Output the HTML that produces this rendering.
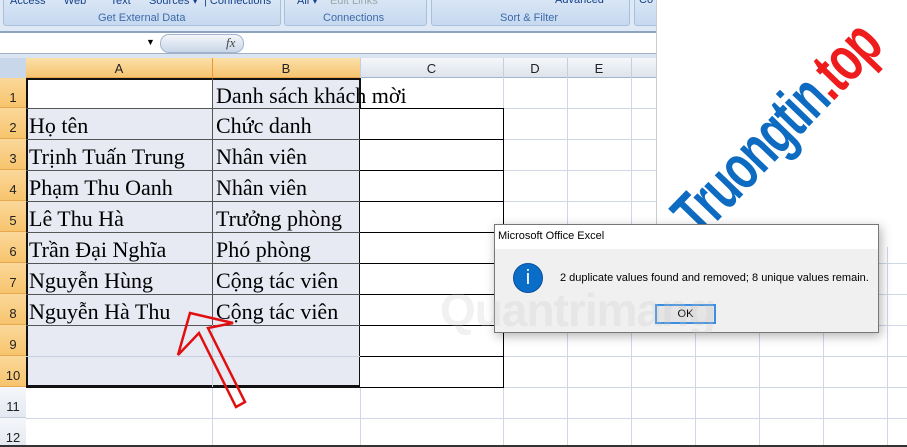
<!DOCTYPE html>
<html><head><meta charset="utf-8"><style>
*{margin:0;padding:0;box-sizing:border-box}
body{width:907px;height:447px;overflow:hidden;background:#fff;position:relative;font-family:"Liberation Sans",sans-serif}
.a{position:absolute}
.t{position:absolute;font-family:"Liberation Serif",serif;font-size:22px;color:#000;white-space:nowrap;line-height:31px}
.rh{position:absolute;left:0;width:26px;text-align:center;font-size:13px;color:#222;background:linear-gradient(#fbd89a,#f7c46d);border-bottom:1px solid #e8a94e;padding-top:12px}
.vl{position:absolute;width:1px;background:#d0d7e5}
.hl{position:absolute;height:1px;background:#d0d7e5}
.g{position:absolute;top:-4px;height:30px;background:linear-gradient(#dbe7f5,#c6d9f0);border:1px solid #a8c0dc;border-radius:3px}
.gl{position:absolute;top:12px;font-size:11px;color:#3e6aaa;white-space:nowrap}
</style></head><body>
<div class="a" style="left:0;top:0;width:907px;height:31px;background:#dfe9f5"></div>
<div class="g" style="left:3px;width:278px"></div>
<div class="g" style="left:284px;width:143px"></div>
<div class="g" style="left:431px;width:199px"></div>
<div class="g" style="left:634px;width:40px"></div>
<div class="a" style="left:10px;top:-6px;font-size:11px;color:#15428b;white-space:nowrap">Access &nbsp;&nbsp;&nbsp;&nbsp; Web &nbsp;&nbsp;&nbsp;&nbsp;&nbsp;&nbsp; Text &nbsp;&nbsp;&nbsp;&nbsp; Sources ▾ &nbsp;| Connections</div>
<div class="a" style="left:297px;top:-6px;font-size:11px;color:#15428b;white-space:nowrap">All ▾ &nbsp;&nbsp; <span style="color:#9aa">Edit Links</span></div>
<div class="a" style="left:555px;top:-6px;font-size:11px;color:#15428b">Advanced</div>
<div class="a" style="left:639px;top:-6px;font-size:11px;color:#15428b">Co</div>
<div class="gl" style="left:98px">Get External Data</div>
<div class="gl" style="left:323px">Connections</div>
<div class="gl" style="left:500px">Sort &amp; Filter</div>
<div class="a" style="left:0;top:31px;width:907px;height:2px;background:#8ea3bf"></div>
<div class="a" style="left:0;top:33px;width:907px;height:20px;background:#fff"></div>
<div class="a" style="left:146px;top:37px;font-size:9px">▼</div>
<div class="a" style="left:160px;top:34px;width:84px;height:19px;border-radius:9px;background:linear-gradient(#f4f7fb,#c9d6e8);border:1px solid #a4b4cc"></div>
<div class="a" style="left:226px;top:35px;font-family:'Liberation Serif',serif;font-style:italic;font-size:13px;color:#444">fx</div>
<div class="a" style="left:0;top:53px;width:907px;height:5px;background:#dbe5f1;border-top:1px solid #9fb0c8"></div>
<div class="a" style="left:0;top:58px;width:907px;height:20px;background:linear-gradient(#f5f7fa,#dee3ec);border-bottom:1px solid #9eb6ce"></div>
<div class="a" style="left:0;top:58px;width:26px;height:20px;background:#c9d7ea"></div>
<div class="a" style="left:26px;top:58px;width:334px;height:20px;background:linear-gradient(#fbe0a8,#f6c470);border-bottom:1px solid #e8a94e"></div>
<div class="a" style="left:26px;top:61px;width:186px;text-align:center;font-size:13px;color:#222">A</div>
<div class="a" style="left:212px;top:61px;width:148px;text-align:center;font-size:13px;color:#222">B</div>
<div class="a" style="left:360px;top:61px;width:143px;text-align:center;font-size:13px;color:#222">C</div>
<div class="a" style="left:503px;top:61px;width:64px;text-align:center;font-size:13px;color:#222">D</div>
<div class="a" style="left:567px;top:61px;width:64px;text-align:center;font-size:13px;color:#222">E</div>
<div class="a" style="left:212px;top:58px;width:1px;height:20px;background:#f29436"></div>
<div class="a" style="left:360px;top:58px;width:1px;height:20px;background:#c5ceda"></div>
<div class="a" style="left:503px;top:58px;width:1px;height:20px;background:#c5ceda"></div>
<div class="a" style="left:567px;top:58px;width:1px;height:20px;background:#c5ceda"></div>
<div class="a" style="left:631px;top:58px;width:1px;height:20px;background:#c5ceda"></div>
<div class="vl" style="left:503px;top:78px;height:369px"></div>
<div class="vl" style="left:567px;top:78px;height:369px"></div>
<div class="vl" style="left:631px;top:78px;height:369px"></div>
<div class="vl" style="left:695px;top:78px;height:369px"></div>
<div class="vl" style="left:759px;top:78px;height:369px"></div>
<div class="vl" style="left:823px;top:78px;height:369px"></div>
<div class="vl" style="left:887px;top:78px;height:369px"></div>
<div class="vl" style="left:212px;top:387px;height:60px"></div>
<div class="vl" style="left:360px;top:387px;height:60px"></div>
<div class="hl" style="left:26px;top:108px;width:881px"></div>
<div class="hl" style="left:26px;top:139px;width:881px"></div>
<div class="hl" style="left:26px;top:170px;width:881px"></div>
<div class="hl" style="left:26px;top:201px;width:881px"></div>
<div class="hl" style="left:26px;top:232px;width:881px"></div>
<div class="hl" style="left:26px;top:263px;width:881px"></div>
<div class="hl" style="left:26px;top:294px;width:881px"></div>
<div class="hl" style="left:26px;top:325px;width:881px"></div>
<div class="hl" style="left:26px;top:356px;width:881px"></div>
<div class="hl" style="left:26px;top:387px;width:881px"></div>
<div class="hl" style="left:26px;top:418px;width:881px"></div>
<div class="rh" style="top:78px;height:30px">1</div>
<div class="rh" style="top:108px;height:31px">2</div>
<div class="rh" style="top:139px;height:31px">3</div>
<div class="rh" style="top:170px;height:31px">4</div>
<div class="rh" style="top:201px;height:31px">5</div>
<div class="rh" style="top:232px;height:31px">6</div>
<div class="rh" style="top:263px;height:31px">7</div>
<div class="rh" style="top:294px;height:31px">8</div>
<div class="rh" style="top:325px;height:31px">9</div>
<div class="rh" style="top:356px;height:31px">10</div>
<div class="rh" style="top:387px;height:31px;background:linear-gradient(#f5f7fa,#e4e9f1);border-bottom:1px solid #c5ceda">11</div>
<div class="rh" style="top:418px;height:29px;background:linear-gradient(#f5f7fa,#e4e9f1)">12</div>
<div class="a" style="left:26px;top:108px;width:334px;height:279px;background:#e7eaf3"></div>
<div class="a" style="left:212px;top:78px;width:148px;height:30px;background:#e7eaf3"></div>
<div class="a" style="left:26px;top:78px;width:335px;height:310px;border:2px solid #111;border-bottom:3px solid #111"></div>
<div class="a" style="left:212px;top:78px;width:1px;height:247px;background:#555"></div>
<div class="a" style="left:26px;top:108px;width:334px;height:1px;background:#555"></div>
<div class="a" style="left:26px;top:139px;width:334px;height:1px;background:#555"></div>
<div class="a" style="left:26px;top:170px;width:334px;height:1px;background:#555"></div>
<div class="a" style="left:26px;top:201px;width:334px;height:1px;background:#555"></div>
<div class="a" style="left:26px;top:232px;width:334px;height:1px;background:#555"></div>
<div class="a" style="left:26px;top:263px;width:334px;height:1px;background:#555"></div>
<div class="a" style="left:26px;top:294px;width:334px;height:1px;background:#555"></div>
<div class="a" style="left:26px;top:325px;width:334px;height:1px;background:#555"></div>
<div class="a" style="left:212px;top:325px;width:1px;height:62px;background:#c8d0e0"></div>
<div class="a" style="left:26px;top:356px;width:334px;height:1px;background:#c8d0e0"></div>
<div class="a" style="left:360px;top:108px;width:144px;height:280px;border:1px solid #000;border-left:none;background:#fff"></div>
<div class="a" style="left:360px;top:139px;width:143px;height:1px;background:#000"></div>
<div class="a" style="left:360px;top:170px;width:143px;height:1px;background:#000"></div>
<div class="a" style="left:360px;top:201px;width:143px;height:1px;background:#000"></div>
<div class="a" style="left:360px;top:232px;width:143px;height:1px;background:#000"></div>
<div class="a" style="left:360px;top:263px;width:143px;height:1px;background:#000"></div>
<div class="a" style="left:360px;top:294px;width:143px;height:1px;background:#000"></div>
<div class="a" style="left:360px;top:325px;width:143px;height:1px;background:#000"></div>
<div class="a" style="left:360px;top:356px;width:143px;height:1px;background:#000"></div>
<div class="a" style="left:0;top:445px;width:907px;height:2px;background:#333"></div>
<div class="t" style="left:216px;top:80px">Danh sách khách mời</div>
<div class="t" style="left:29px;top:110px">Họ tên</div><div class="t" style="left:216px;top:110px">Chức danh</div>
<div class="t" style="left:29px;top:141px">Trịnh Tuấn Trung</div><div class="t" style="left:216px;top:141px">Nhân viên</div>
<div class="t" style="left:29px;top:172px">Phạm Thu Oanh</div><div class="t" style="left:216px;top:172px">Nhân viên</div>
<div class="t" style="left:29px;top:203px">Lê Thu Hà</div><div class="t" style="left:216px;top:203px">Trưởng phòng</div>
<div class="t" style="left:29px;top:234px">Trần Đại Nghĩa</div><div class="t" style="left:216px;top:234px">Phó phòng</div>
<div class="t" style="left:29px;top:265px">Nguyễn Hùng</div><div class="t" style="left:216px;top:265px">Cộng tác viên</div>
<div class="t" style="left:29px;top:296px">Nguyễn Hà Thu</div><div class="t" style="left:216px;top:296px">Cộng tác viên</div>
<svg class="a" style="left:0;top:0" width="907" height="447"><polygon points="190,313 233,323 208,328 245,402 236,407 199,333 178,355" fill="none" stroke="#e01010" stroke-width="2.5" stroke-linejoin="miter"/></svg>
<div class="a" style="left:656px;top:0;width:251px;height:247px;background:#fff;border-left:1px solid #ccc"></div>
<div class="a" style="left:0;top:0;width:907px;height:247px;overflow:hidden">
<div class="a" style="left:706px;top:184px;height:62px;font-weight:bold;font-size:64px;line-height:62px;color:#0e6bc2;white-space:nowrap;transform:rotate(-46deg) scaleX(0.69);transform-origin:0 100%;letter-spacing:-2px">Truongtin<span style="color:#ee1c1c">.top</span></div>
</div>
<div class="a" style="left:494px;top:224px;width:385px;height:109px;background:#f0f0f0;border:1px solid #777;box-shadow:2px 3px 10px rgba(0,0,0,.3)"></div>
<div class="a" style="left:495px;top:225px;width:383px;height:24px;background:#fff"></div>
<div class="a" style="left:498px;top:230px;font-size:11px;color:#000">Microsoft Office Excel</div>
<div class="a" style="left:513px;top:263px;width:30px;height:30px;border-radius:50%;background:#0a6dc7;border:1px solid #0a4f9a;color:#fff;text-align:center;font-size:20px;line-height:28px">i</div>
<div class="a" style="left:560px;top:272px;font-size:11px;color:#000;white-space:nowrap">2 duplicate values found and removed; 8 unique values remain.</div>
<div class="a" style="left:655px;top:304px;width:61px;height:20px;border:2px solid #3b8ee0;background:#e5e5e5;font-size:11px;text-align:center;line-height:16px">OK</div>
<div class="a" style="left:440px;top:283px;font-size:46px;font-weight:bold;color:rgba(200,200,200,.25);white-space:nowrap;letter-spacing:-1px">Quantrimang</div>
</body></html>
